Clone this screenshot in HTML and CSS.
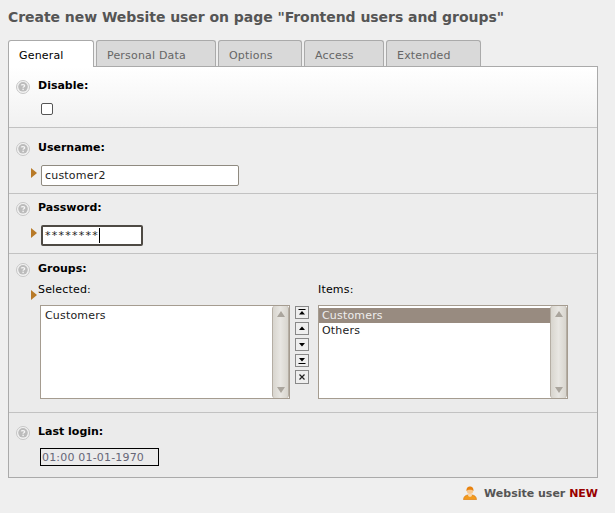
FILE: index.html
```html
<!DOCTYPE html>
<html lang="en">

<head>
  <meta charset="UTF-8">
  <meta name="viewport" content="width=device-width, initial-scale=1.0">
  <title>Create new Website user</title>
  <link rel="stylesheet" href="styles.css">
</head>

<body>
  <svg class="defs" width="0" height="0">
    <symbol id="help" viewBox="0 0 14 14">
      <circle cx="7" cy="7" r="6.500" fill="#f3f3f3" stroke="#c6c6c6" />
      <circle cx="7" cy="6.800" r="4.800" fill="#bcbcbc" />
      <path d="M5.300 5.400c.2-1.100 3.400-1.300 3.400.4 0 1-1.500 1-1.600 2" fill="none" stroke="#f6f6f6" stroke-width="1.300" />
      <rect x="6.400" y="8.700" width="1.400" height="1.400" fill="#f6f6f6" />
    </symbol>
    <symbol id="marker" viewBox="0 0 6 10">
      <path d="M0 0l6 5-6 5z" fill="#b87a28" />
    </symbol>
  </svg>

  <h1 class="title">Create new Website user on page "Frontend users and groups"</h1>

  <div class="tabs">
    <div class="tab active">General</div>
    <div class="tab">Personal Data</div>
    <div class="tab">Options</div>
    <div class="tab">Access</div>
    <div class="tab">Extended</div>
  </div>

  <div class="panel">
    <div class="section section-first">
      <div class="label-row"><svg class="help"><use href="#help" /></svg><span class="label">Disable:</span></div>
      <div class="row"><input class="check" type="checkbox"></div>
    </div>

    <div class="section section-user">
      <div class="label-row"><svg class="help"><use href="#help" /></svg><span class="label">Username:</span></div>
      <div class="row">
        <svg class="marker"><use href="#marker" /></svg>
        <input class="text user" type="text" value="customer2">
      </div>
    </div>

    <div class="section section-pass">
      <div class="label-row"><svg class="help"><use href="#help" /></svg><span class="label">Password:</span></div>
      <div class="row">
        <svg class="marker"><use href="#marker" /></svg>
        <div class="text pass"><span class="stars">********</span><span class="caret"></span></div>
      </div>
    </div>

    <div class="section section-groups">
      <div class="label-row"><svg class="help"><use href="#help" /></svg><span class="label">Groups:</span></div>
      <div class="group-grid">
        <div class="group-head"><svg class="marker marker-low"><use href="#marker" /></svg>Selected:</div>
        <div></div>
        <div class="group-head items-head">Items:</div>

        <div class="list">
          <div class="list-body">
            <div class="option">Customers</div>
          </div>
          <div class="scroll"><span class="up"></span><span class="down"></span></div>
        </div>

        <div class="buttons">
          <button class="move"><svg viewBox="0 0 12 11"><path d="M2.500 2h7v1h-7zM6 4l3 3.500H3z" /></svg></button>
          <button class="move"><svg viewBox="0 0 12 11"><path d="M6 3.500L9 7H3z" /></svg></button>
          <button class="move"><svg viewBox="0 0 12 11"><path d="M3 4h6L6 7.500z" /></svg></button>
          <button class="move"><svg viewBox="0 0 12 11"><path d="M3 3h6L6 6.500zM2.500 8h7v1h-7z" /></svg></button>
          <button class="move move-last"><svg viewBox="0 0 12 12"><path d="M3.500 3.500l5 5M8.500 3.500l-5 5" stroke="#222" stroke-width="1.200" /></svg></button>
        </div>

        <div class="list list-items">
          <div class="list-body">
            <div class="option selected">Customers</div>
            <div class="option">Others</div>
          </div>
          <div class="scroll"><span class="up"></span><span class="down"></span></div>
        </div>
      </div>
    </div>

    <div class="section section-login">
      <div class="label-row"><svg class="help"><use href="#help" /></svg><span class="label">Last login:</span></div>
      <div class="row"><div class="date">01:00 01-01-1970</div></div>
    </div>
  </div>

  <div class="footer">
    <svg class="user-icon" viewBox="0 0 14 14">
      <path d="M.5 13.700c0-3 2-4.300 4-4.700h5c2 .4 4 1.700 4 4.700z" fill="#f39a1d" stroke="#d97a10" stroke-width=".6" />
      <path d="M5.500 8h3l.5 2-2 1-2-1z" fill="#fbd9ad" />
      <circle cx="7" cy="4.800" r="3.200" fill="#f8c890" />
      <path d="M3.600 5.200C3.100 1.700 5.200.4 7 .4s3.900 1.300 3.400 4.800C9.700 3.300 4.300 3.300 3.600 5.200z" fill="#e8820f" />
    </svg>
    <span class="footer-text">Website user <span class="new">NEW</span></span>
  </div>
</body>

</html>
```

FILE: styles.css
```css
body {
  margin: 0;
  padding: 0 8px;
  background-color: #efefef;
  font-family: "DejaVu Sans", sans-serif;
  font-size: 11px;
  letter-spacing: .18px;
  color: #000;
}

.defs {
  position: absolute;
}

.title {
  margin: 0;
  padding-top: 9px;
  height: 40px;
  box-sizing: border-box;
  font-size: 14px;
  line-height: 17px;
  font-weight: bold;
  letter-spacing: -.05px;
  color: #555;
}

.tabs {
  display: flex;
  gap: 2px;
  height: 26px;
}

.tab {
  box-sizing: border-box;
  height: 26px;
  padding: 8px 0 0 10px;
  line-height: 14px;
  border: 1px solid #aaa;
  border-bottom: none;
  border-radius: 3px 3px 0 0;
  background-color: #d9d9d9;
  color: #666;
}

.tab:nth-child(1) {
  width: 86px;
}

.tab:nth-child(2) {
  width: 120px;
}

.tab:nth-child(3) {
  width: 84px;
}

.tab:nth-child(4) {
  width: 80px;
}

.tab:nth-child(5) {
  width: 95px;
}

.tab.active {
  position: relative;
  z-index: 1;
  height: 27px;
  background-color: #fff;
  color: #000;
}

.panel {
  width: 590px;
  box-sizing: border-box;
  border: 1px solid #aaa;
  background-color: #ebebeb;
}

.section {
  box-sizing: border-box;
  padding-left: 7px;
  border-bottom: 1px solid #c2c2c2;
}

.section-first {
  height: 61px;
  padding-top: 11px;
  background: linear-gradient(#fff, #f1f1f1);
}

.section-first .row {
  margin-top: 9px;
}

.section-user {
  height: 66px;
  padding-top: 12px;
  background-color: #eee;
}

.section-user .row {
  margin-top: 9px;
}

.section-pass {
  height: 60px;
  padding-top: 6px;
  background-color: #ededed;
}

.section-groups {
  height: 159px;
  padding-top: 7px;
}

.section-login {
  height: 64px;
  padding-top: 11px;
  border-bottom: none;
}

.label-row {
  display: flex;
  align-items: center;
  gap: 8px;
  height: 16px;
}

.help {
  width: 14px;
  height: 14px;
  margin-top: 2px;
}

.label {
  font-weight: bold;
  line-height: 16px;
  letter-spacing: 0;
}

.row {
  display: flex;
  align-items: center;
  margin-top: 10px;
  padding-left: 25px;
  position: relative;
}

.section-pass .row {
  margin-top: 9px;
}

.marker {
  position: absolute;
  left: 15px;
  top: 3px;
  width: 6px;
  height: 10px;
}

.marker-low {
  left: 15px;
  top: 11px;
}

.check {
  width: 12px;
  height: 12px;
  margin: 0;
  appearance: none;
  background-color: #fff;
  border: 1px solid #555;
  border-radius: 2px;
}

.text {
  box-sizing: border-box;
  height: 21px;
  padding: 0 3px;
  font-family: "DejaVu Sans", sans-serif;
  font-size: 11px;
  letter-spacing: .2px;
  color: #222;
  background-color: #fff;
  border: 1px solid #8f8a80;
  border-radius: 2px;
}

.user {
  width: 198px;
}

.pass {
  display: flex;
  align-items: center;
  width: 102px;
  border: 2px solid #4e4a44;
  padding: 0 2px;
}

.stars {
  letter-spacing: 1.25px;
}

.caret {
  width: 1px;
  height: 15px;
  background-color: #000;
}

.group-grid {
  display: grid;
  grid-template-columns: 250px 28px 250px;
  grid-template-rows: 26px 94px;
  position: relative;
  margin-top: 2px;
  padding-left: 24px;
  line-height: 14px;
}

.group-head {
  padding-top: 4px;
  margin-left: -2px;
}

.items-head {
  margin-left: 0;
}

.list {
  display: flex;
  box-sizing: border-box;
  border: 1px solid #a59c90;
  background-color: #fff;
  height: 94px;
}

.list-body {
  flex: 1;
  padding-top: 2px;
}

.option {
  height: 15px;
  padding-left: 4px;
  line-height: 15px;
  color: #222;
}

.list-items .option {
  padding-left: 3px;
}

.option.selected {
  background-color: #988b80;
  color: #eee;
}

.scroll {
  display: flex;
  flex-direction: column;
  justify-content: space-between;
  align-items: center;
  box-sizing: border-box;
  width: 17px;
  padding: 5px 0;
  background: linear-gradient(90deg, #d8d5ce, #e8e6e2 50%, #d8d5ce);
  border-left: 1px solid #b5aea4;
  border-right: 1px solid #b5aea4;
  border-radius: 3px;
}

.up,
.down {
  width: 0;
  height: 0;
  border-left: 4px solid transparent;
  border-right: 4px solid transparent;
}

.up {
  border-bottom: 6px solid #aaa59d;
}

.down {
  border-top: 6px solid #aaa59d;
}

.buttons {
  display: flex;
  flex-direction: column;
  gap: 3px;
  padding: 1px 0 0 5px;
}

.move {
  display: block;
  width: 14px;
  height: 13px;
  padding: 0;
  border: 1px solid #888;
  background-color: #eee;
}

.move-last {
  height: 14px;
}

.move svg {
  display: block;
  width: 12px;
  height: 11px;
}

.move-last svg {
  height: 12px;
}

.date {
  box-sizing: border-box;
  width: 119px;
  height: 18px;
  padding-left: 1px;
  line-height: 17px;
  color: #667;
  border: 1px solid #000;
}

.section-login .row {
  margin-top: 8px;
  padding-left: 24px;
}

.footer {
  display: flex;
  align-items: center;
  justify-content: flex-end;
  gap: 7px;
  height: 30px;
  width: 590px;
}

.user-icon {
  width: 14px;
  height: 14px;
}

.footer-text {
  font-weight: bold;
  letter-spacing: 0;
  color: #555;
}

.new {
  color: #900;
}
```
